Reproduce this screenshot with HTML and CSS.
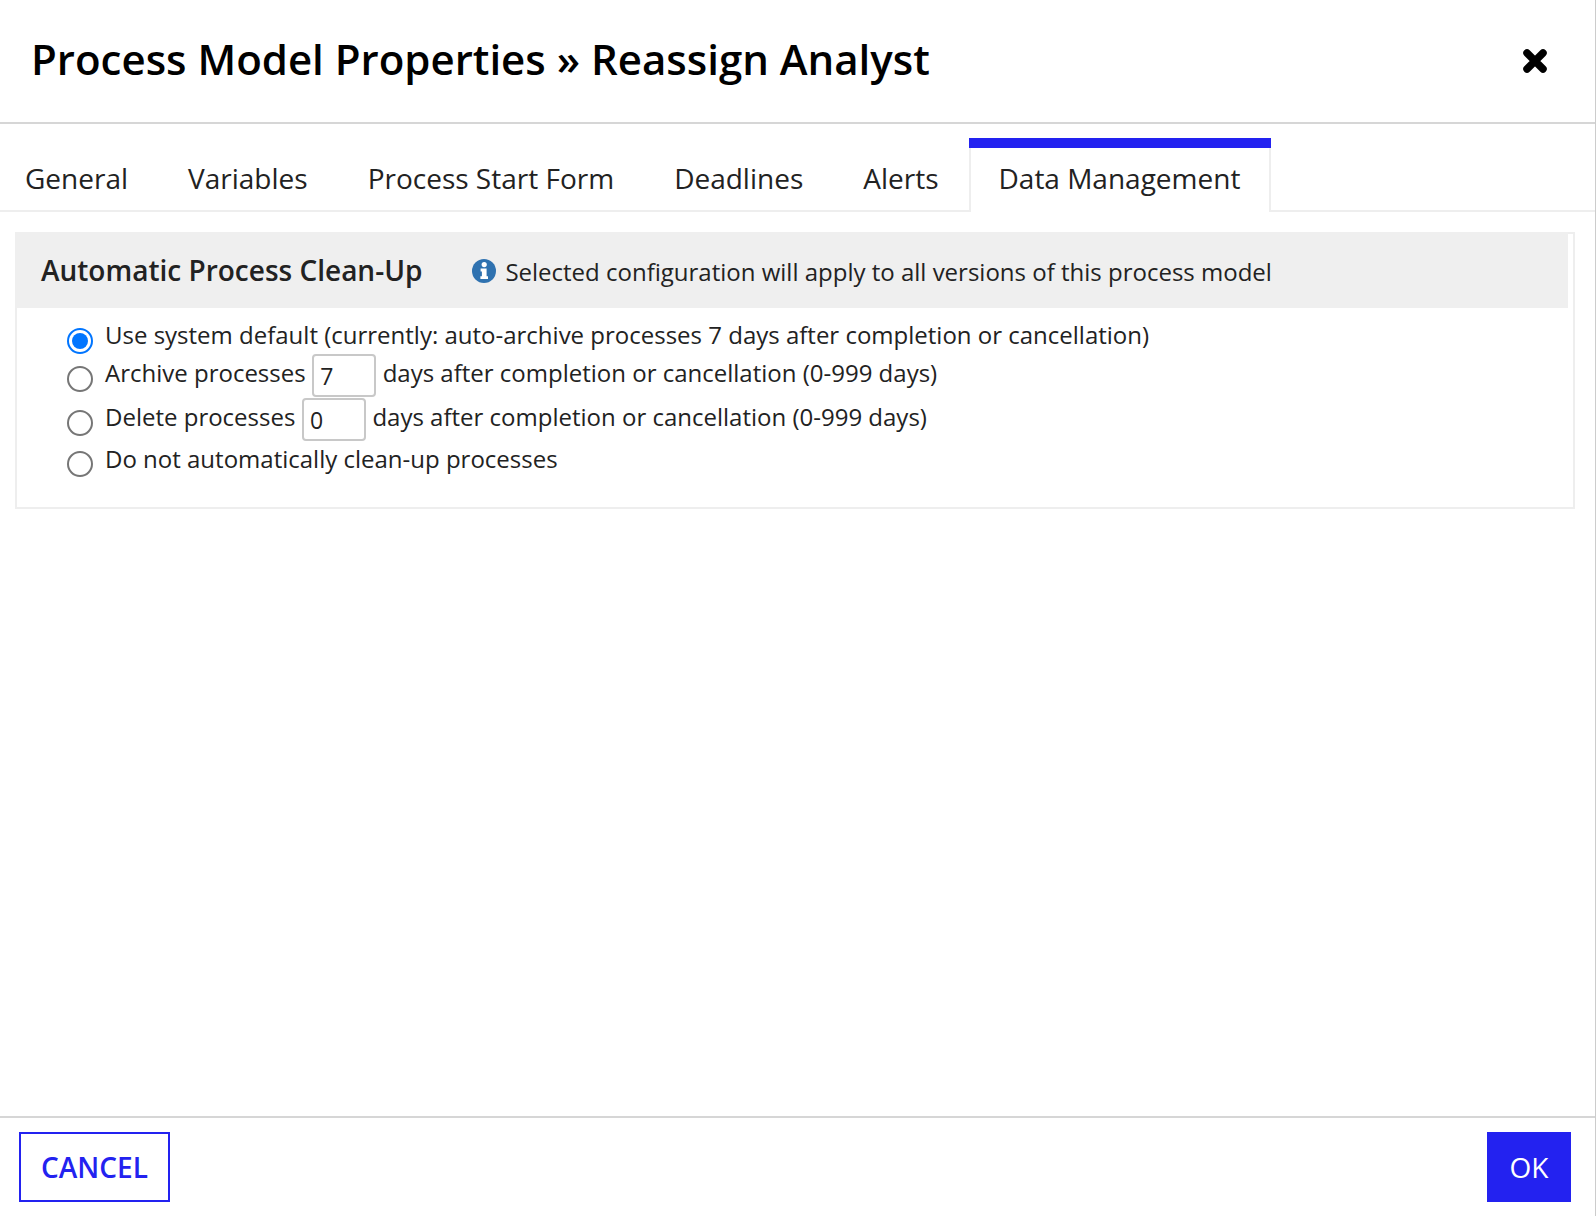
FILE: index.html
```html
<!DOCTYPE html>
<html lang="en">
<head>
  <meta charset="UTF-8">
  <meta name="viewport" content="width=device-width, initial-scale=1.0">
  <title>Process Model Properties</title>
  <link rel="stylesheet" href="styles.css">
</head>
<body>

  <div class="dialog">
    <div class="dialog-header">
      <h1>Process Model Properties » Reassign Analyst</h1>
      <button class="close-btn" aria-label="Close">
        <svg width="24" height="24" viewBox="0 0 24 24">
          <path d="M4 4 L20 20 M20 4 L4 20" stroke="#000" stroke-width="7.5" stroke-linecap="round" fill="none"/>
        </svg>
      </button>
    </div>

    <div class="tabs">
      <a class="tab">General</a>
      <a class="tab">Variables</a>
      <a class="tab">Process Start Form</a>
      <a class="tab">Deadlines</a>
      <a class="tab">Alerts</a>
      <a class="tab active">Data Management</a>
    </div>

    <div class="dialog-body">
      <div class="panel">
        <div class="panel-heading">
          <h2>Automatic Process Clean-Up</h2>
          <svg class="info-icon" width="24" height="24" viewBox="0 0 24 24">
            <circle cx="12" cy="12" r="12" fill="#2f72b0"/>
            <circle cx="12.2" cy="5.6" r="2.6" fill="#fff"/>
            <path d="M8.6 9.6 H14.6 V17.2 H16 V20 H8.4 V17.2 H9.9 V12.4 H8.6 Z" fill="#fff"/>
          </svg>
          <span class="note">Selected configuration will apply to all versions of this process model</span>
        </div>

        <div class="options">
          <label class="option option-first">
            <input type="radio" name="cleanup" checked>
            <span>Use system default (currently: auto-archive processes 7 days after completion or cancellation)</span>
          </label>
          <label class="option option-field">
            <input type="radio" name="cleanup">
            <span>Archive processes</span>
            <input type="text" class="days-input" value="7">
            <span>days after completion or cancellation (0-999 days)</span>
          </label>
          <label class="option option-field">
            <input type="radio" name="cleanup">
            <span>Delete processes</span>
            <input type="text" class="days-input" value="0">
            <span>days after completion or cancellation (0-999 days)</span>
          </label>
          <label class="option option-last">
            <input type="radio" name="cleanup">
            <span>Do not automatically clean-up processes</span>
          </label>
        </div>
      </div>
    </div>

    <div class="dialog-footer">
      <button class="btn btn-outline">CANCEL</button>
      <button class="btn btn-primary">OK</button>
    </div>
  </div>

</body>
</html>
```

FILE: styles.css
```css
* {
  box-sizing: border-box;
}
body {
  margin: 0;
  font-family: "Open Sans", sans-serif;
  color: #222;
  background-color: #fff;
}
.dialog {
  height: 1216px;
  display: flex;
  flex-direction: column;
  border-right: 1px solid #ccc;
}
.dialog-header {
  height: 124px;
  display: flex;
  align-items: center;
  justify-content: space-between;
  padding: 0 48px 0 31px;
  border-bottom: 2px solid #d6d6d6;
}
.dialog-header h1 {
  margin: 0 0 6px;
  font-size: 42px;
  font-weight: 600;
  color: #000;
}
.close-btn {
  display: flex;
  padding: 0;
  border: none;
  background: none;
  cursor: pointer;
}
.tabs {
  height: 88px;
  padding-top: 14px;
  display: flex;
  align-items: stretch;
  margin-left: -5px;
  border-bottom: 2px solid #eee;
}
.tab {
  padding: 20px 30px 0;
  font-size: 28px;
  line-height: 40px;
}
.tab.active {
  position: relative;
  height: 74px;
  padding: 20px 29px 0 28px;
  background-color: #fff;
  border-left: 2px solid #eee;
  border-right: 2px solid #eee;
}
.tab.active::before {
  content: "";
  position: absolute;
  top: 0;
  left: -2px;
  right: -2px;
  height: 10px;
  background-color: #2322f0;
}
.dialog-body {
  flex: 1;
  padding: 20px 20px 0 15px;
}
.panel {
  border: 2px solid #eee;
}
.panel-heading {
  height: 76px;
  margin: -2px 5px 0 -2px;
  padding: 0 0 0 26px;
  display: flex;
  align-items: center;
  background-color: #efefef;
}
.panel-heading h2 {
  margin: 0 50px 0 0;
  font-size: 28px;
  font-weight: 600;
}
.info-icon {
  margin: 2px 9px 0 0;
}
.note {
  font-size: 24px;
  padding-top: 3px;
}
.options {
  padding: 20px 0 19px 50px;
  font-size: 24px;
}
.option {
  display: flex;
  align-items: flex-start;
  line-height: 34px;
}
.option input[type="radio"] {
  appearance: none;
  width: 26px;
  height: 26px;
  margin: 0 12px 0 0;
  padding: 3px;
  flex-shrink: 0;
  border: 2px solid #767676;
  border-radius: 50%;
  background-clip: content-box;
}
.option input[type="radio"]:checked {
  border-color: #0075ff;
  background-color: #0075ff;
}
.option-first {
  height: 26px;
  line-height: 14px;
}
.option-field {
  height: 44px;
}
.option-field input[type="radio"] {
  margin-top: 12px;
}
.option-field span {
  margin-top: 2px;
}
.option-last {
  height: 46px;
}
.option-last input[type="radio"] {
  margin-top: 9px;
}
.days-input {
  width: 64px;
  height: 43px;
  margin: 0 6.5px;
  padding: 1px 6px 0;
  font-family: inherit;
  font-size: 23px;
  color: #222;
  border: 2px solid #c8c8c8;
  border-radius: 4px;
}
.dialog-footer {
  height: 100px;
  padding: 14px 24px 14px 19px;
  display: flex;
  justify-content: space-between;
  border-top: 2px solid #d6d6d6;
}
.btn {
  height: 70px;
  font-family: inherit;
  font-size: 28px;
  cursor: pointer;
}
.btn-outline {
  width: 151px;
  font-weight: 600;
  color: #2322f0;
  background-color: #fff;
  border: 2px solid #2322f0;
}
.btn-primary {
  width: 84px;
  font-weight: 400;
  color: #fff;
  background-color: #2322f0;
  border: none;
}
```
